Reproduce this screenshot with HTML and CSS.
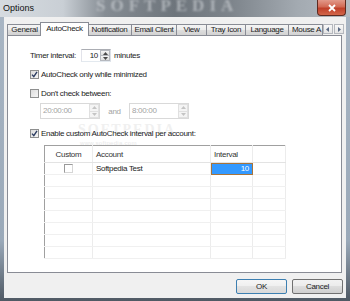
FILE: index.html
```html
<!DOCTYPE html>
<html lang="en">

<head>
    <meta charset="UTF-8">
    <title>Options</title>
    <link rel="stylesheet" href="styles.css">
</head>

<body>
<div class="window">
    <div class="titlebar">
        <span class="title">Options</span>
        <span class="glass-mark">SOFTPEDIA</span>
        <div class="close">
            <svg width="10" height="8" viewBox="0 0 10 8"><path d="M2 1 L8 7 M8 1 L2 7" stroke="#fff" stroke-width="1.8" fill="none"/></svg>
        </div>
    </div>

    <div class="client">
        <div class="tabs">
            <div class="tab tab-general">General</div>
            <div class="tab tab-autocheck active">AutoCheck</div>
            <div class="tab tab-notification">Notification</div>
            <div class="tab tab-email">Email Client</div>
            <div class="tab tab-view">View</div>
            <div class="tab tab-tray">Tray Icon</div>
            <div class="tab tab-language">Language</div>
            <div class="tab tab-mouse">Mouse A</div>
            <div class="tab-arrow">
                <svg width="4" height="5" viewBox="0 0 4 5"><path d="M3 0 L0 2.5 L3 5 Z" fill="#5a6a84"/></svg>
            </div>
            <div class="tab-arrow">
                <svg width="4" height="5" viewBox="0 0 4 5"><path d="M1 0 L4 2.5 L1 5 Z" fill="#5a6a84"/></svg>
            </div>
        </div>

        <div class="panel">
            <div class="watermark">SOFTPEDIA</div>
            <div class="watermark-url">www.softpedia.com</div>

            <div class="row timer-row">
                <span class="timer-label">Timer interval:</span>
                <div class="spin">
                    <span class="spin-value">10</span>
                    <div class="spin-buttons">
                        <div class="spin-btn"><svg width="5" height="3" viewBox="0 0 5 3"><path d="M0 3 L2.5 0 L5 3 Z" fill="#4a4a4a"/></svg></div>
                        <div class="spin-btn"><svg width="5" height="3" viewBox="0 0 5 3"><path d="M0 0 L2.5 3 L5 0 Z" fill="#4a4a4a"/></svg></div>
                    </div>
                </div>
                <span>minutes</span>
            </div>

            <label class="row check-row">
                <span class="checkbox">
                    <svg width="7" height="7" viewBox="0 0 7 7"><path d="M1 3.6 L2.8 5.6 L6 0.8" stroke="#2c3d62" stroke-width="1.4" fill="none"/></svg>
                </span>
                AutoCheck only while minimized
            </label>

            <label class="row check-row check-gap">
                <span class="checkbox"></span>
                Don't check between:
            </label>

            <div class="row time-row">
                <div class="spin time disabled">
                    <span class="spin-value">20:00:00</span>
                    <div class="spin-buttons">
                        <div class="spin-btn"><svg width="5" height="3" viewBox="0 0 5 3"><path d="M0 3 L2.5 0 L5 3 Z" fill="#c4c4c4"/></svg></div>
                        <div class="spin-btn"><svg width="5" height="3" viewBox="0 0 5 3"><path d="M0 0 L2.5 3 L5 0 Z" fill="#c4c4c4"/></svg></div>
                    </div>
                </div>
                <span class="and">and</span>
                <div class="spin time disabled">
                    <span class="spin-value">8:00:00</span>
                    <div class="spin-buttons">
                        <div class="spin-btn"><svg width="5" height="3" viewBox="0 0 5 3"><path d="M0 3 L2.5 0 L5 3 Z" fill="#c4c4c4"/></svg></div>
                        <div class="spin-btn"><svg width="5" height="3" viewBox="0 0 5 3"><path d="M0 0 L2.5 3 L5 0 Z" fill="#c4c4c4"/></svg></div>
                    </div>
                </div>
            </div>

            <label class="row check-row custom-row">
                <span class="checkbox">
                    <svg width="7" height="7" viewBox="0 0 7 7"><path d="M1 3.6 L2.8 5.6 L6 0.8" stroke="#2c3d62" stroke-width="1.4" fill="none"/></svg>
                </span>
                Enable custom AutoCheck interval per account:
            </label>

            <table class="grid">
                <tr class="grid-head">
                    <th class="col-custom">Custom</th>
                    <th class="col-account">Account</th>
                    <th class="col-interval">Interval</th>
                    <th></th>
                </tr>
                <tr>
                    <td class="col-custom"><span class="cell-box"></span></td>
                    <td>Softpedia Test</td>
                    <td class="selected">10</td>
                    <td></td>
                </tr>
                <tr><td></td><td></td><td></td><td></td></tr>
                <tr><td></td><td></td><td></td><td></td></tr>
                <tr><td></td><td></td><td></td><td></td></tr>
                <tr><td></td><td></td><td></td><td></td></tr>
                <tr><td></td><td></td><td></td><td></td></tr>
                <tr><td></td><td></td><td></td><td></td></tr>
                <tr><td></td><td></td><td></td><td></td></tr>
            </table>
        </div>

        <div class="buttons">
            <button class="btn default">OK</button>
            <button class="btn">Cancel</button>
        </div>
    </div>
</div>
</body>
</html>
```

FILE: styles.css
```css
* {
    box-sizing: border-box;
}

body {
    margin: 0;
    width: 350px;
    height: 301px;
    overflow: hidden;
    font-family: "Liberation Sans", Arial, sans-serif;
    font-size: 8px;
    letter-spacing: -0.3px;
    color: #1b1b1b;
}

.window {
    width: 350px;
    height: 301px;
    display: flex;
    flex-direction: column;
    padding: 0 4px 3px 4px;
    background: linear-gradient(180deg, #a9b6c4 0%, #9aa9b9 80%, #4f5964 100%);
}

/* title bar */
.titlebar {
    position: relative;
    height: 17px;
    margin: 0 -4px;
    overflow: hidden;
    background: linear-gradient(90deg, #d6dbe0 0%, #c9cfd5 18%, #858c93 30%, #6e757c 50%, #7d848b 66%, #a3aab1 85%, #b4bbc2 100%);
}

.title {
    position: absolute;
    left: 3px;
    top: 3px;
    font-size: 9px;
    letter-spacing: 0;
    color: #111;
}

.glass-mark {
    position: absolute;
    left: 96px;
    top: -4px;
    font-family: "Liberation Serif", serif;
    font-weight: bold;
    font-size: 17px;
    line-height: 20px;
    letter-spacing: 5px;
    color: rgba(220, 224, 228, 0.55);
    filter: blur(0.8px);
}

.close {
    position: absolute;
    left: 317px;
    top: 0;
    width: 29px;
    height: 16px;
    border: 1px solid #5e2a20;
    border-top: none;
    border-radius: 0 0 4px 4px;
    background: linear-gradient(180deg, #e2998a 0%, #d26a55 45%, #c0402a 55%, #d2664a 100%);
    display: flex;
    align-items: center;
    justify-content: center;
}

/* client area */
.client {
    flex: 1;
    background: #f0f0f0;
    padding: 5px 4px 0 3px;
    display: flex;
    flex-direction: column;
}

.tabs {
    display: flex;
    align-items: flex-end;
    height: 13px;
    position: relative;
    z-index: 2;
}

.tab {
    height: 11px;
    margin-right: -1px;
    border: 1px solid #898c95;
    border-bottom: none;
    background: linear-gradient(180deg, #f4f4f4 0%, #ebebeb 50%, #dedede 50%, #d2d2d2 100%);
    text-align: center;
    line-height: 10px;
    white-space: nowrap;
    overflow: hidden;
    flex-shrink: 0;
}

.tab.active {
    height: 14px;
    margin-left: -1px;
    margin-right: -2px;
    margin-bottom: -1px;
    background: #fff;
    line-height: 11px;
    position: relative;
}

.tab-general { width: 35px; }
.tab-autocheck { width: 49px; }
.tab-notification { width: 45px; }
.tab-email { width: 46px; }
.tab-view { width: 31px; }
.tab-tray { width: 40px; }
.tab-language { width: 44px; }
.tab-mouse { width: 35px; text-align: left; padding-left: 3px; }

.tab-arrow {
    width: 10px;
    height: 10px;
    margin-left: 1px;
    margin-bottom: 1px;
    border: 1px solid #b4b7bd;
    background: linear-gradient(180deg, #f8f8f8, #e4e4e4);
    display: flex;
    align-items: center;
    justify-content: center;
    flex-shrink: 0;
}

.panel {
    position: relative;
    z-index: 1;
    height: 238px;
    border: 1px solid #898c95;
    background: #fff;
    padding: 13px 0 0 22px;
    display: flex;
    flex-direction: column;
    align-items: flex-start;
}

.watermark {
    position: absolute;
    left: 70px;
    top: 86px;
    z-index: -1;
    font-family: "Liberation Serif", serif;
    font-weight: bold;
    font-size: 14px;
    letter-spacing: 2px;
    color: #f0f0f0;
}

.watermark-url {
    position: absolute;
    left: 72px;
    top: 104px;
    z-index: -1;
    font-size: 6px;
    letter-spacing: 0.3px;
    color: #e8e8e8;
}

.row {
    display: flex;
    align-items: center;
}

.timer-row {
    height: 13px;
}

.timer-label {
    width: 51px;
}

.spin {
    display: flex;
    align-items: stretch;
    width: 30px;
    height: 13px;
    margin-right: 3px;
    border: 1px solid #abadb3;
    border-color: #abadb3 #dbdfe6 #e3e9ef #e2e3ea;
    background: #fff;
}

.spin-value {
    flex: 1;
    text-align: right;
    padding-right: 2px;
    line-height: 11px;
}

.spin-buttons {
    width: 10px;
    display: flex;
    flex-direction: column;
}

.spin-btn {
    flex: 1;
    border: 1px solid #b6b9bf;
    background: linear-gradient(180deg, #f6f6f6, #dedede);
    display: flex;
    align-items: center;
    justify-content: center;
}

.spin-btn + .spin-btn {
    border-top: none;
}

.check-row {
    height: 11px;
    margin-top: 7px;
}

.check-gap {
    margin-top: 8px;
}

.checkbox {
    width: 9px;
    height: 9px;
    margin-right: 2px;
    border: 1px solid #8e8f8f;
    background: linear-gradient(135deg, #dcdcdc, #f6f6f6);
    display: flex;
    align-items: center;
    justify-content: center;
}

.time-row {
    margin-top: 4px;
    margin-left: 10px;
    height: 16px;
}

.spin.time {
    width: 60px;
    height: 16px;
    margin-right: 0;
}

.spin.time .spin-value {
    text-align: left;
    padding-left: 2px;
    line-height: 14px;
}

.spin.disabled {
    border-color: #d9d9d9;
    color: #a3a3a3;
}

.spin.disabled .spin-btn {
    border-color: #e0e0e0;
    background: #f4f4f4;
}

.and {
    width: 29px;
    text-align: center;
    color: #a3a3a3;
}

.custom-row {
    margin-top: 9px;
}

/* account grid */
.grid {
    margin-top: 6px;
    margin-left: 14px;
    width: 242px;
    border-collapse: collapse;
    border: 1px solid #a0a0a0;
    table-layout: fixed;
}

.grid th,
.grid td {
    height: 12px;
    padding: 0 3px;
    border-right: 1px solid #ececec;
    border-bottom: 1px solid #f0f0f0;
    font-weight: normal;
    text-align: left;
    white-space: nowrap;
}

.grid-head th {
    height: 17px;
    color: #333;
    border-bottom: 1px solid #e3e3e3;
}

.grid .col-custom {
    width: 48px;
    text-align: center;
}

.col-account {
    width: 118px;
}

.col-interval {
    width: 42px;
}

.cell-box {
    display: inline-block;
    width: 9px;
    height: 9px;
    vertical-align: middle;
    border: 1px solid #9a9a9a;
    border-right-color: #d6d6d6;
    border-bottom-color: #d6d6d6;
}

.grid td.selected {
    background: #3399ff;
    color: #fff;
    text-align: right;
    outline: 1px solid #a8743a;
    outline-offset: -1px;
}

/* dialog buttons */
.buttons {
    display: flex;
    justify-content: flex-end;
    gap: 5px;
    margin-top: 6px;
    margin-right: -1px;
}

.btn {
    width: 51px;
    height: 15px;
    padding: 0;
    font-family: inherit;
    font-size: 8px;
    letter-spacing: -0.3px;
    color: #1b1b1b;
    border: 1px solid #707070;
    border-radius: 2px;
    background: linear-gradient(180deg, #f2f2f2 0%, #ebebeb 50%, #dddddd 50%, #cfcfcf 100%);
}

.btn.default {
    border-color: #3c7fb1;
    background: linear-gradient(180deg, #f6f6f6 0%, #efefef 50%, #e3e3e3 50%, #d9d9d9 100%);
}
```
